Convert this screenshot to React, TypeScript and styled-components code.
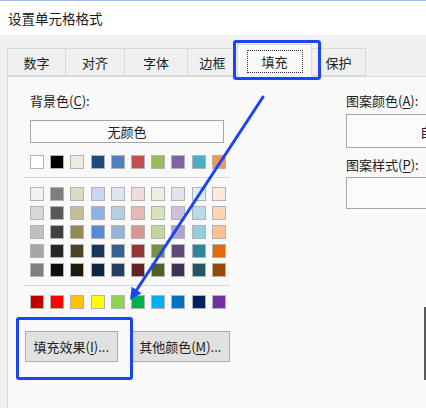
import React from 'react'
import styled, { createGlobalStyle } from 'styled-components'

const Global = createGlobalStyle`
  html, body { margin: 0; padding: 0; }
  body { font-family: "Noto Sans CJK SC", "Noto Sans", sans-serif; }
`

const FONT = `"Noto Sans CJK SC", "Noto Sans", sans-serif`
const BLUE = '#1b45f0'

const Window = styled.div`
  position: relative;
  width: 426px;
  height: 408px;
  overflow: hidden;
  background: #f0f0f0;
  font-family: ${FONT};
  color: #202020;
  display: flex;
  flex-direction: column;
`

const TitleBar = styled.div`
  height: 34px;
  flex-shrink: 0;
  border-top: 1px solid #9cbde9;
  background: #ffffff;
  display: flex;
  align-items: center;
  padding-left: 8px;
  font-size: 13.5px;
  color: #1a1a1a;
`

const Body = styled.div`
  padding: 9px 0 0 7px;
  display: flex;
  flex-direction: column;
  flex: 1;
`

const TabRow = styled.div`
  display: flex;
  align-items: flex-end;
  height: 32px;
  flex-shrink: 0;
`

const Tab = styled.div<{ $w: number; $active?: boolean }>`
  box-sizing: border-box;
  width: ${p => p.$w}px;
  height: ${p => (p.$active ? 33 : 28)}px;
  margin-bottom: ${p => (p.$active ? -1 : 0)}px;
  margin-left: -1px;
  border: 1px solid #d9d9d9;
  border-bottom: ${p => (p.$active ? 'none' : '1px solid #d9d9d9')};
  background: ${p => (p.$active ? '#f9f9f9' : '#f0f0f0')};
  display: flex;
  align-items: center;
  justify-content: center;
  font-size: 13px;
  position: relative;
  z-index: ${p => (p.$active ? 2 : 1)};
  &:first-child { margin-left: 0; }
`

const FocusRing = styled.span`
  box-sizing: border-box;
  width: 56px;
  height: 23px;
  margin-top: 1px;
  border: 1px dotted #333;
  display: flex;
  align-items: center;
  justify-content: center;
`

const Panel = styled.div`
  flex: 1;
  display: flex;
  border-top: 1px solid #d9d9d9;
  border-left: 1px solid #d9d9d9;
  background: #f9f9f9;
  padding: 16px 0 0 22px;
  width: 560px;
  flex-shrink: 0;
`

const LeftCol = styled.div`
  width: 200px;
  display: flex;
  flex-direction: column;
  flex-shrink: 0;
`

const RightCol = styled.div`
  margin-left: 116px;
  display: flex;
  flex-direction: column;
  flex-shrink: 0;
`

const Label = styled.div<{ $mt?: number }>`
  font-size: 13px;
  line-height: 16px;
  height: 16px;
  margin-top: ${p => p.$mt ?? 0}px;
  white-space: nowrap;
`

const U = styled.span`
  text-decoration: underline;
  text-underline-offset: 2px;
`

const NoColor = styled.div`
  box-sizing: border-box;
  width: 194px;
  height: 23px;
  margin-top: 11px;
  border: 1px solid #a6a6a6;
  background: #fbfbfb;
  display: flex;
  align-items: center;
  justify-content: center;
  font-size: 13px;
`

const Swatches = styled.div<{ $mt: number }>`
  display: grid;
  grid-template-columns: repeat(10, 14px);
  column-gap: 6.2px;
  row-gap: 5px;
  margin-top: ${p => p.$mt}px;
`

const Swatch = styled.span<{ $c: string }>`
  box-sizing: border-box;
  width: 14px;
  height: 14px;
  background: ${p => p.$c};
  border: 1px solid #b2b2b2;
`

const Separator = styled.div`
  height: 1px;
  width: 207px;
  margin: 8px 0 0 -7px;
  background: #d8d8d8;
`

const ButtonRow = styled.div`
  display: flex;
  gap: 13px;
  margin: 22px 0 0 -5px;
`

const Button = styled.div<{ $w: number }>`
  box-sizing: border-box;
  width: ${p => p.$w}px;
  height: 31px;
  border: 1px solid #adadad;
  background: #e1e1e1;
  display: flex;
  align-items: center;
  justify-content: center;
  font-size: 13px;
  white-space: nowrap;
`

const Field = styled.div<{ $h: number; $mt: number }>`
  box-sizing: border-box;
  width: 170px;
  height: ${p => p.$h}px;
  margin-top: ${p => p.$mt}px;
  border: 1px solid #a6a6a6;
  background: #fbfbfb;
  display: flex;
  align-items: center;
  padding-left: 73px;
  font-size: 13px;
`

const SampleEdge = styled.div`
  width: 80px;
  height: 73px;
  margin: 98px 0 0 78px;
  border-left: 2px solid #5a5a5a;
`

const Highlight = styled.div<{ $x: number; $y: number; $w: number; $h: number }>`
  position: absolute;
  left: ${p => p.$x}px;
  top: ${p => p.$y}px;
  width: ${p => p.$w}px;
  height: ${p => p.$h}px;
  box-sizing: border-box;
  border: 3px solid ${BLUE};
  border-radius: 3px;
  z-index: 5;
  pointer-events: none;
`

const ArrowLayer = styled.svg`
  position: absolute;
  left: 0;
  top: 0;
  z-index: 5;
  pointer-events: none;
`

const themeRow = ['#ffffff', '#000000', '#eeece1', '#1f497d', '#4f81bd', '#c0504d', '#9bbb59', '#8064a2', '#4bacc6', '#f79646']

const shades = [
  '#f2f2f2', '#7f7f7f', '#ddd9c3', '#c6d9f0', '#dbe5f1', '#f2dcdb', '#ebf1dd', '#e5e0ec', '#dbeef3', '#fdeada',
  '#d8d8d8', '#595959', '#c4bd97', '#8db3e2', '#b8cce4', '#e5b9b7', '#d7e3bc', '#ccc1d9', '#b7dde8', '#fbd5b5',
  '#bfbfbf', '#3f3f3f', '#938953', '#548dd4', '#95b3d7', '#d99694', '#c3d69b', '#b2a2c7', '#92cddc', '#fac08f',
  '#a5a5a5', '#262626', '#494429', '#17365d', '#366092', '#953734', '#76923c', '#5f497a', '#31859b', '#e36c09',
  '#7f7f7f', '#0c0c0c', '#1d1b10', '#0f243e', '#244061', '#632423', '#4f6128', '#3f3151', '#205867', '#974806',
]

const standard = ['#c00000', '#ff0000', '#ffc000', '#ffff00', '#92d050', '#00b050', '#00b0f0', '#0070c0', '#002060', '#7030a0']

const tabs = [
  { name: '数字', w: 59 },
  { name: '对齐', w: 60 },
  { name: '字体', w: 64 },
  { name: '边框', w: 51 },
  { name: '填充', w: 75, active: true },
  { name: '保护', w: 55 },
]

export default function App() {
  return (
    <Window>
      <Global />
      <TitleBar>设置单元格格式</TitleBar>
      <Body>
        <TabRow>
          {tabs.map(t => (
            <Tab key={t.name} $w={t.w} $active={t.active}>
              {t.active ? <FocusRing>{t.name}</FocusRing> : t.name}
            </Tab>
          ))}
        </TabRow>
        <Panel>
          <LeftCol>
            <Label>背景色(<U>C</U>):</Label>
            <NoColor>无颜色</NoColor>
            <Swatches $mt={12}>
              {themeRow.map((c, i) => <Swatch key={i} $c={c} />)}
            </Swatches>
            <Separator />
            <Swatches $mt={9}>
              {shades.map((c, i) => <Swatch key={i} $c={c} />)}
            </Swatches>
            <Separator />
            <Swatches $mt={9}>
              {standard.map((c, i) => <Swatch key={i} $c={c} />)}
            </Swatches>
            <ButtonRow>
              <Button $w={96}>填充效果(<U>I</U>)...</Button>
              <Button $w={103}>其他颜色(<U>M</U>)...</Button>
            </ButtonRow>
          </LeftCol>
          <RightCol>
            <Label>图案颜色(<U>A</U>):</Label>
            <Field $h={34} $mt={5}>自动</Field>
            <Label $mt={9}>图案样式(<U>P</U>):</Label>
            <Field $h={32} $mt={4} />
            <SampleEdge />
          </RightCol>
        </Panel>
      </Body>

      <Highlight $x={233} $y={40} $w={88} $h={40} />
      <Highlight $x={16} $y={317} $w={117} $h={63} />
      <ArrowLayer width="426" height="408" viewBox="0 0 426 408">
        <line x1="263" y1="97" x2="136.6" y2="290" stroke={BLUE} strokeWidth="3" strokeLinecap="round" />
        <polygon points="130,300 141.5,293.2 131.7,286.8" fill={BLUE} />
      </ArrowLayer>
    </Window>
  )
}
